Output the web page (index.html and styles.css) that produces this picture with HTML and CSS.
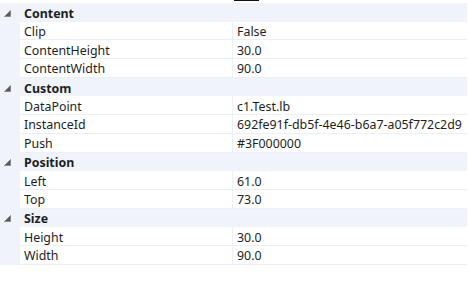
FILE: index.html
```html
<!DOCTYPE html>
<html lang="en">
<head>
    <meta charset="UTF-8">
    <title>Properties</title>
    <link rel="stylesheet" href="styles.css">
</head>
<body>
    <div class="top-mark"></div>

    <div class="grid">
        <!-- Content -->
        <div class="category">
            <span class="expander"><svg width="7" height="7" viewBox="0 0 7 7"><polygon points="6.5,0.5 6.5,6.5 0.5,6.5" fill="#595959" stroke="#8a8a8a" stroke-width="1"/></svg></span>
            <span class="cat-name">Content</span>
        </div>
        <div class="prop"><span class="margin"></span><span class="name">Clip</span><span class="value">False</span></div>
        <div class="prop"><span class="margin"></span><span class="name">ContentHeight</span><span class="value">30.0</span></div>
        <div class="prop"><span class="margin"></span><span class="name">ContentWidth</span><span class="value">90.0</span></div>

        <!-- Custom -->
        <div class="category">
            <span class="expander"><svg width="7" height="7" viewBox="0 0 7 7"><polygon points="6.5,0.5 6.5,6.5 0.5,6.5" fill="#595959" stroke="#8a8a8a" stroke-width="1"/></svg></span>
            <span class="cat-name">Custom</span>
        </div>
        <div class="prop"><span class="margin"></span><span class="name">DataPoint</span><span class="value">c1.Test.lb</span></div>
        <div class="prop"><span class="margin"></span><span class="name">InstanceId</span><span class="value">692fe91f-db5f-4e46-b6a7-a05f772c2d9</span></div>
        <div class="prop"><span class="margin"></span><span class="name">Push</span><span class="value">#3F000000</span></div>

        <!-- Position -->
        <div class="category">
            <span class="expander"><svg width="7" height="7" viewBox="0 0 7 7"><polygon points="6.5,0.5 6.5,6.5 0.5,6.5" fill="#595959" stroke="#8a8a8a" stroke-width="1"/></svg></span>
            <span class="cat-name">Position</span>
        </div>
        <div class="prop"><span class="margin"></span><span class="name">Left</span><span class="value">61.0</span></div>
        <div class="prop"><span class="margin"></span><span class="name">Top</span><span class="value">73.0</span></div>

        <!-- Size -->
        <div class="category">
            <span class="expander"><svg width="7" height="7" viewBox="0 0 7 7"><polygon points="6.5,0.5 6.5,6.5 0.5,6.5" fill="#595959" stroke="#8a8a8a" stroke-width="1"/></svg></span>
            <span class="cat-name">Size</span>
        </div>
        <div class="prop"><span class="margin"></span><span class="name">Height</span><span class="value">30.0</span></div>
        <div class="prop"><span class="margin"></span><span class="name">Width</span><span class="value">90.0</span></div>
    </div>
</body>
</html>
```

FILE: styles.css
```css
body {
    margin: 0;
    background: #fff;
    font-family: "Noto Sans", "Open Sans", sans-serif;
    font-size: 12.4px;
    color: #1e1e1e;
    overflow: hidden;
}
.top-mark {
    position: absolute;
    top: 0;
    left: 234px;
    width: 25px;
    height: 1px;
    background: #111;
}
.grid {
    width: 467px;
    padding-top: 3px;
}
.category {
    display: flex;
    align-items: center;
    height: 18.7px;
    padding-top: 2px;
    box-sizing: border-box;
    background: #f0f4fa;
}
.expander {
    width: 20px;
    display: flex;
    justify-content: center;
    padding-right: 5px;
    box-sizing: border-box;
}
.expander svg {
    display: block;
}
.cat-name {
    font-weight: bold;
    padding-left: 4px;
}
.prop {
    display: grid;
    grid-template-columns: 20px 212px 1fr;
    height: 18.7px;
}
.margin {
    background: #f0f4fa;
}
.name, .value {
    display: flex;
    align-items: center;
    padding-top: 2px;
    box-sizing: border-box;
    border-bottom: 1px solid #ebf0f7;
    white-space: nowrap;
    overflow: hidden;
}
.name {
    padding-left: 4px;
}
.value {
    padding-left: 4px;
    border-left: 1px solid #ebf0f7;
}
```
